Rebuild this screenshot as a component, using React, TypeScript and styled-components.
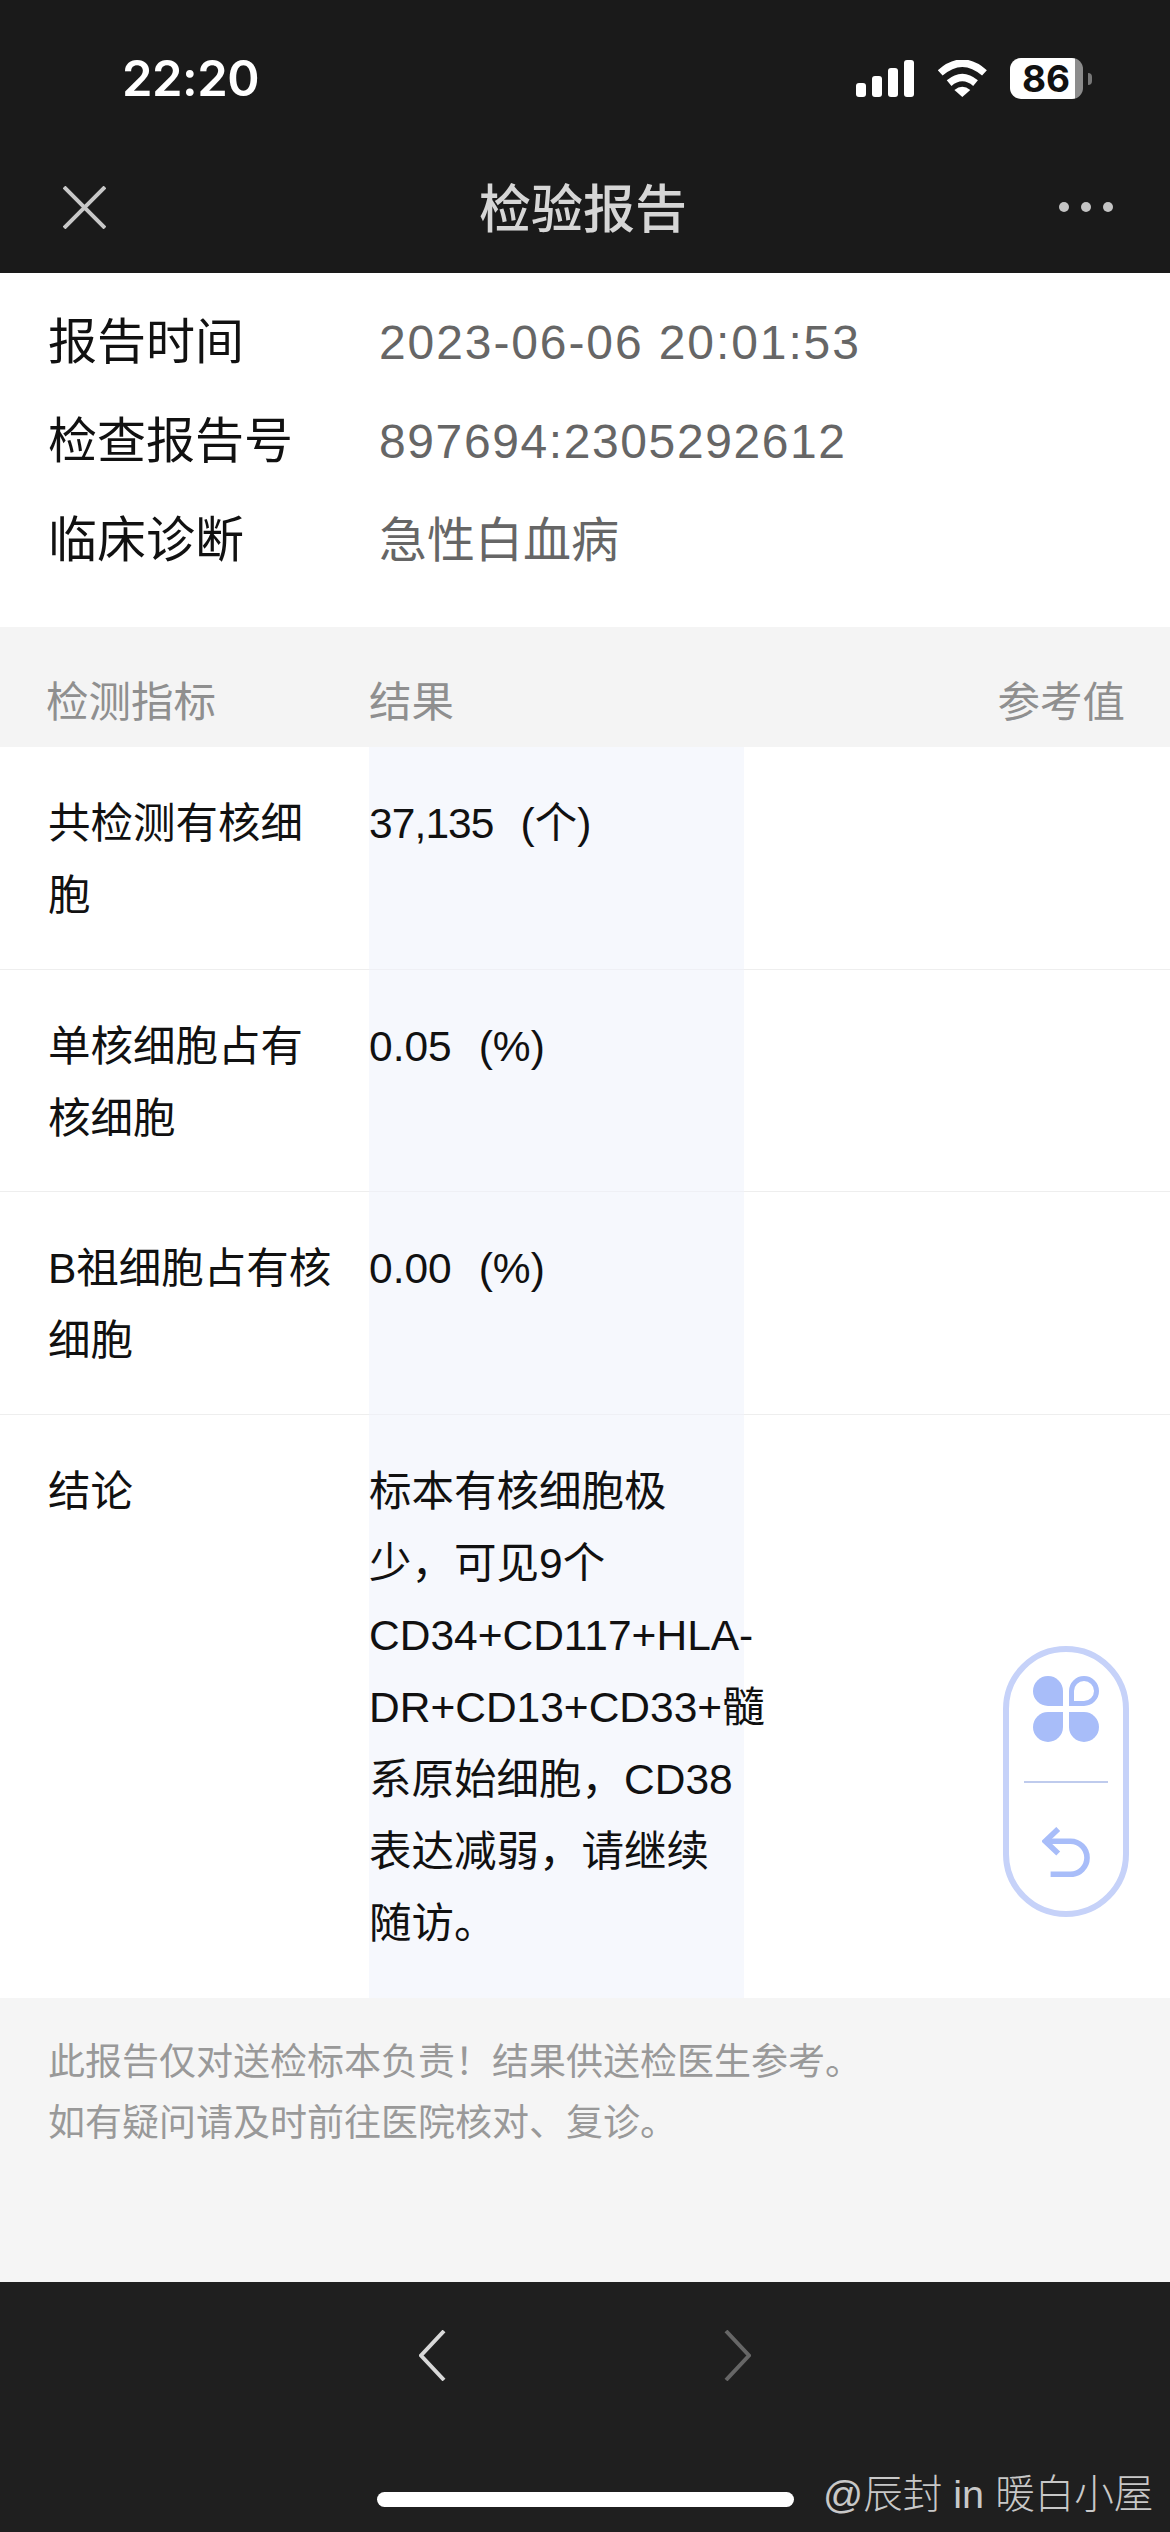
import * as React from 'react';
import styled, { createGlobalStyle } from 'styled-components';

const GlobalStyle = createGlobalStyle`
    html, body {
        margin: 0;
        padding: 0;
        background: #fff;
    }
    * {
        box-sizing: border-box;
    }
`;

const Page = styled.div`
    position: relative;
    width: 1170px;
    height: 2532px;
    overflow: hidden;
    display: flex;
    flex-direction: column;
    background: #fff;
    font-family: "Liberation Sans", "Noto Sans CJK SC", sans-serif;
`;

const TopBar = styled.header`
    background: #1a1a1a;
    height: 273px;
    flex: none;
`;

const StatusBar = styled.div`
    height: 141px;
    padding: 50px 87px 35px 122px;
    display: flex;
    align-items: center;
    justify-content: space-between;
`;

const Clock = styled.span`
    color: #fff;
    font-family: Inter, "Liberation Sans", sans-serif;
    font-size: 49px;
    font-weight: 600;
    letter-spacing: -0.5px;
`;

const StatusIcons = styled.div`
    display: flex;
    align-items: center;
`;

const Signal = styled.div`
    display: flex;
    align-items: flex-end;
    gap: 6px;
    height: 37px;
    margin-right: 23px;
`;

const SignalBar = styled.i<{ $height: number }>`
    display: block;
    width: 10px;
    height: ${p => p.$height}px;
    border-radius: 3px;
    background: #fff;
`;

const Battery = styled.div`
    position: relative;
    width: 73px;
    height: 41px;
    margin-left: 23px;
    border-radius: 11px;
    background: linear-gradient(to right, #fff 89%, #8c8c8c 89%);
    color: #111;
    font-family: Inter, "Liberation Sans", sans-serif;
    font-size: 37px;
    font-weight: 700;
    line-height: 41px;
    padding-left: 12px;
    &::after {
        content: "";
        position: absolute;
        right: -9px;
        top: 15px;
        width: 4px;
        height: 12px;
        border-radius: 0 6px 6px 0;
        background: #777;
    }
`;

const NavBar = styled.nav`
    height: 132px;
    padding: 0 57px 0 63px;
    display: grid;
    grid-template-columns: 1fr auto 1fr;
    align-items: center;
`;

const NavTitle = styled.h1`
    margin: 0 10px 3px 0;
    color: #d6d6d6;
    font-size: 52px;
    font-weight: 500;
`;

const Dots = styled.div`
    justify-self: end;
    display: flex;
    gap: 12px;
    & i {
        display: block;
        width: 10px;
        height: 10px;
        border-radius: 50%;
        background: #c4c4c4;
    }
`;

const Info = styled.section`
    padding: 20px 0 37px 48px;
    flex: none;
`;

const InfoRow = styled.div`
    display: flex;
    height: 99px;
    align-items: baseline;
    font-size: 48px;
    line-height: 99px;
`;

const InfoLabel = styled.span`
    width: 331px;
    color: #111;
    font-size: 49px;
`;

const InfoValue = styled.span<{ $tracking?: number }>`
    color: #666;
    letter-spacing: ${p => p.$tracking ?? 0}px;
`;

const HeadRow = styled.div`
    display: grid;
    grid-template-columns: 369px 375px 1fr;
    align-items: center;
    height: 120px;
    padding-top: 22px;
    flex: none;
    background: #f4f4f4;
    color: #8f8f8f;
    font-size: 42.5px;
`;

const HeadCell = styled.span<{ $right?: boolean }>`
    padding-right: ${p => (p.$right ? '45px' : '0')};
    text-align: ${p => (p.$right ? 'right' : 'left')};
    &:first-child {
        padding-left: 46px;
    }
`;

const Row = styled.div`
    display: grid;
    grid-template-columns: 369px 375px 1fr;
    flex: none;
    font-size: 42.5px;
    line-height: 72px;
    color: #111;
`;

const NameCell = styled.div<{ $last?: boolean }>`
    padding: 41px 30px ${p => (p.$last ? '37px' : '36.67px')} 48px;
    border-bottom: 1px solid ${p => (p.$last ? 'transparent' : '#eeeeee')};
`;

const ResultCell = styled.div<{ $last?: boolean }>`
    padding: 41px 0 ${p => (p.$last ? '37px' : '36.67px')};
    background: #f6f8fd;
    border-bottom: 1px solid ${p => (p.$last ? 'transparent' : '#eff0f5')};
    white-space: nowrap;
`;

const Amount = styled.span<{ $tracking?: number }>`
    letter-spacing: ${p => p.$tracking ?? 0}px;
`;

const Unit = styled.span`
    margin-left: 27px;
`;

const RefCell = styled.div<{ $last?: boolean }>`
    border-bottom: 1px solid ${p => (p.$last ? 'transparent' : '#eeeeee')};
`;

const Notice = styled.footer`
    flex: 1;
    background: #f5f5f5;
    padding: 34px 48px 0;
    color: #999;
    font-size: 37px;
    line-height: 61px;
`;

const BottomBar = styled.div`
    position: relative;
    flex: none;
    height: 250px;
    background: #1f1f1f;
    display: flex;
    flex-direction: column;
    align-items: center;
`;

const Pager = styled.div`
    display: flex;
    gap: 278px;
    margin-top: 48px;
`;

const HomeIndicator = styled.div`
    width: 417px;
    height: 15px;
    margin-top: 111px;
    border-radius: 8px;
    background: #fff;
`;

const Watermark = styled.span`
    position: absolute;
    left: 823px;
    top: 180px;
    color: #c8c8c8;
    font-size: 39.6px;
    font-weight: 300;
    white-space: nowrap;
`;

const FloatingTool = styled.div`
    position: absolute;
    left: 1003px;
    top: 1646px;
    width: 126px;
    height: 271px;
    padding-top: 24px;
    border: 6px solid #c6d2f9;
    border-radius: 63px;
    background: #fff;
    display: flex;
    flex-direction: column;
    align-items: center;
`;

const ToolDivider = styled.div`
    width: 84px;
    height: 2px;
    margin: 39px 0 44px;
    background: #bfcbed;
`;

const CloverIcon = () => (
    <svg width="66" height="66" viewBox="0 0 66 66" fill="#a8bdf9">
        <path d="M15 0A15 15 0 0 1 30 15V30H15A15 15 0 0 1 15 0Z" />
        <path d="M51 2.5A12.5 12.5 0 0 1 51 27.5H38.5V15A12.5 12.5 0 0 1 51 2.5Z" fill="none" stroke="#a8bdf9" strokeWidth="5" />
        <path d="M15 36H30V51A15 15 0 0 1 0 51A15 15 0 0 1 15 36Z" />
        <path d="M36 36H51A15 15 0 0 1 51 66A15 15 0 0 1 36 51Z" />
    </svg>
);

const BackIcon = () => (
    <svg width="48" height="50" viewBox="245 617 143 151" fill="none" stroke="#a8bdf9" strokeWidth="17">
        <path d="M293 623L254 660L293 697" />
        <path d="M254 660H330A50 50 0 0 1 330 760H270" />
    </svg>
);

const WifiIcon = () => (
    <svg width="50" height="37" viewBox="288 56 150 112" fill="none" stroke="#fff" strokeWidth="22">
        <path d="M297 95Q364 36 431 95" />
        <path d="M324 126Q364 92 404 126" />
        <path d="M340 147Q364 127 388 147L364 168Z" fill="#fff" stroke="none" />
    </svg>
);

const CloseIcon = () => (
    <svg width="43" height="43" viewBox="0 0 43 43" stroke="#c8c8c8" strokeWidth="4">
        <path d="M1 1L42 42M42 1L1 42" />
    </svg>
);

const Chevron = ({ dir, color }: { dir: 'left' | 'right'; color: string }) => (
    <svg width="27" height="51" viewBox="0 0 27 51" fill="none" stroke={color} strokeWidth="4">
        <path d={dir === 'left' ? 'M25 1L2 25.5L25 50' : 'M2 1L25 25.5L2 50'} />
    </svg>
);

type Result = {
    name: string;
    value?: string;
    tracking?: number;
    unit?: string;
    lines?: string[];
};

const results: Result[] = [
    { name: '共检测有核细胞', value: '37,135', tracking: -0.9, unit: '(个)' },
    { name: '单核细胞占有核细胞', value: '0.05', unit: '(%)' },
    { name: 'B祖细胞占有核细胞', value: '0.00', unit: '(%)' },
    {
        name: '结论',
        lines: [
            '标本有核细胞极',
            '少，可见9个',
            'CD34+CD117+HLA-',
            'DR+CD13+CD33+髓',
            '系原始细胞，CD38',
            '表达减弱，请继续',
            '随访。',
        ],
    },
];

const signalHeights = [14, 21, 29, 37];

export default function App() {
    return (
        <Page>
            <GlobalStyle />
            <TopBar>
                <StatusBar>
                    <Clock>22:20</Clock>
                    <StatusIcons>
                        <Signal>
                            {signalHeights.map(h => <SignalBar key={h} $height={h} />)}
                        </Signal>
                        <WifiIcon />
                        <Battery>86</Battery>
                    </StatusIcons>
                </StatusBar>
                <NavBar>
                    <CloseIcon />
                    <NavTitle>检验报告</NavTitle>
                    <Dots><i /><i /><i /></Dots>
                </NavBar>
            </TopBar>

            <Info>
                <InfoRow>
                    <InfoLabel>报告时间</InfoLabel>
                    <InfoValue $tracking={1.9}>2023-06-06 20:01:53</InfoValue>
                </InfoRow>
                <InfoRow>
                    <InfoLabel>检查报告号</InfoLabel>
                    <InfoValue $tracking={1.6}>897694:2305292612</InfoValue>
                </InfoRow>
                <InfoRow>
                    <InfoLabel>临床诊断</InfoLabel>
                    <InfoValue>急性白血病</InfoValue>
                </InfoRow>
            </Info>

            <HeadRow>
                <HeadCell>检测指标</HeadCell>
                <HeadCell>结果</HeadCell>
                <HeadCell $right>参考值</HeadCell>
            </HeadRow>

            {results.map((r, i) => {
                const last = i === results.length - 1;
                return (
                    <Row key={r.name}>
                        <NameCell $last={last}>{r.name}</NameCell>
                        <ResultCell $last={last}>
                            {r.lines
                                ? r.lines.map(line => <div key={line}>{line}</div>)
                                : <><Amount $tracking={r.tracking}>{r.value}</Amount><Unit>{r.unit}</Unit></>}
                        </ResultCell>
                        <RefCell $last={last} />
                    </Row>
                );
            })}

            <Notice>
                此报告仅对送检标本负责！结果供送检医生参考。<br />
                如有疑问请及时前往医院核对、复诊。
            </Notice>

            <BottomBar>
                <Pager>
                    <Chevron dir="left" color="#d8d8d8" />
                    <Chevron dir="right" color="#666" />
                </Pager>
                <HomeIndicator />
                <Watermark>@辰封 in 暖白小屋</Watermark>
            </BottomBar>

            <FloatingTool>
                <CloverIcon />
                <ToolDivider />
                <BackIcon />
            </FloatingTool>
        </Page>
    );
}
